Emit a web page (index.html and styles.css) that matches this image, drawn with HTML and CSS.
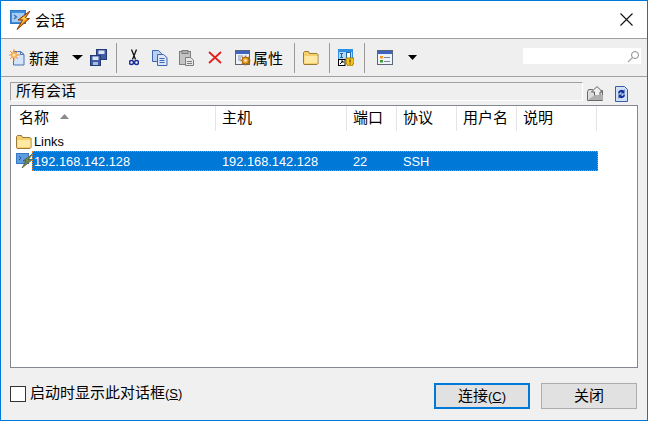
FILE: index.html
```html
<!DOCTYPE html>
<html lang="zh">
<head>
<meta charset="utf-8">
<title>会话</title>
<link rel="stylesheet" href="styles.css">
</head>
<body>
<div class="window">
  <header class="titlebar">
    <svg class="app-icon" width="21" height="20" viewBox="0 0 21 20">
      <rect x="0.500" y="0.500" width="15" height="13" fill="#3f8fe0" stroke="#2f78c8"/>
      <rect x="2" y="3" width="12" height="9" fill="#a8cdf2"/>
      <path d="M4 5l2.500 2L4 9" fill="none" stroke="#2f70b8" stroke-width="1.300"/>
      <path d="M20 1L8 10h4.500L7 19.500 19.500 8.500H15l5-7.500z" fill="#f08c14" stroke="#8a3a0c"/>
      <path d="M16 5l-5 4h3l-3 5 6-6h-3z" fill="#ffd94a"/>
    </svg>
    <span class="title">会话</span>
    <svg class="close" width="13" height="13" viewBox="0 0 13 13"><path d="M0.500 0.500l12 12M12.500 0.500l-12 12" stroke="#111" stroke-width="1.100" fill="none"/></svg>
  </header>

  <div class="toolbar">
    <svg class="i i-new" width="17" height="17" viewBox="0 0 17 17">
      <path d="M4.500 2.500h7l3.500 3v10.500h-10.500z" fill="#d4e4fa" stroke="#4f73b0"/>
      <path d="M11.500 2.500v3h3.500z" fill="#fff" stroke="#4f73b0"/>
      <path d="M5 0v12M-1 6h12M1 2l8 8M9 2l-8 8" stroke="#f09030" stroke-width="1"/>
      <circle cx="5" cy="6" r="3" fill="#f8a850"/>
      <circle cx="5" cy="6" r="1.500" fill="#fff0b0"/>
    </svg>
    <span class="label l-new">新建</span>
    <svg class="arrow a-new" width="11" height="5" viewBox="0 0 11 5"><path d="M0 0h11L5.500 5z" fill="#000"/></svg>
    <svg class="i i-save" width="17" height="17" viewBox="0 0 17 17">
      <rect x="6.500" y="0.500" width="10" height="10" fill="#3f5ca4" stroke="#223a78"/>
      <rect x="8.500" y="1.500" width="6" height="3.500" fill="#dbe4f5"/>
      <rect x="0.500" y="6.500" width="10" height="10" fill="#3f5ca4" stroke="#223a78"/>
      <rect x="2.500" y="7.500" width="6" height="3.500" fill="#dbe4f5"/>
      <rect x="3" y="13" width="5" height="3" fill="#a8bce0"/>
    </svg>
    <span class="sep s1"></span>
    <svg class="i i-cut" width="10" height="17" viewBox="0 0 10 17">
      <path d="M2.500 0.500l4 10M7.500 0.500l-4 10" stroke="#111" stroke-width="1.300" fill="none"/>
      <circle cx="2.500" cy="13.500" r="2" fill="none" stroke="#1c2f9c" stroke-width="1.500"/>
      <circle cx="7.500" cy="13.500" r="2" fill="none" stroke="#1c2f9c" stroke-width="1.500"/>
    </svg>
    <svg class="i i-copy" width="16" height="16" viewBox="0 0 16 16">
      <path d="M0.500 0.500h6l3 3v8h-9z" fill="#b9d0f2" stroke="#3f66b0"/>
      <path d="M5.500 4.500h6l3.500 3v8h-9.500z" fill="#dce8f9" stroke="#3f66b0"/>
      <path d="M7.500 8.500h5M7.500 10.500h5M7.500 12.500h5" stroke="#3f66b0"/>
    </svg>
    <svg class="i i-paste" width="16" height="16" viewBox="0 0 16 16">
      <rect x="0.500" y="1.500" width="11" height="13" fill="#c4c4c4" stroke="#7e7e7e"/>
      <rect x="3" y="0.500" width="6" height="3" fill="#adadad" stroke="#7e7e7e"/>
      <path d="M6.500 7.500h5l3 2.500v5.500h-8z" fill="#e6e6e6" stroke="#7e7e7e"/>
      <path d="M8 11.500h5M8 13.500h5" stroke="#7e7e7e"/>
    </svg>
    <svg class="i i-del" width="14" height="13" viewBox="0 0 14 13">
      <path d="M1 1l12 11M13 1L1 12" stroke="#e0201c" stroke-width="1.800" fill="none"/>
    </svg>
    <svg class="i i-prop" width="17" height="16" viewBox="0 0 17 16">
      <rect x="0.500" y="0.500" width="14" height="14" fill="#eef2fa" stroke="#5a6476"/>
      <rect x="1" y="1" width="13" height="3" fill="#3f63c0"/>
      <path d="M3 6h5M3 8h3M3 10h3" stroke="#8294b8"/>
      <path d="M10.500 5.500v2M10.500 13.500v2M5.500 10.500h2M13.500 10.500h2M7 7l1.500 1.500M14 7l-1.500 1.500M7 14l1.500-1.500M14 14l-1.500-1.500" stroke="#c07a14" stroke-width="1.500"/>
      <circle cx="10.500" cy="10.500" r="3.500" fill="#eca52c" stroke="#a0620c"/>
      <circle cx="10.500" cy="10.500" r="1.200" fill="#fff2c8"/>
    </svg>
    <span class="label l-prop">属性</span>
    <span class="sep s2"></span>
    <svg class="i i-folder" width="16" height="14" viewBox="0 0 16 14">
      <path d="M0.500 12.500V1.500l1-1h4l1 2h7.500l1 1v9l-1 1h-13z" fill="#f6cf6a" stroke="#9a7a34"/>
      <path d="M1.500 5h13v7h-13z" fill="#fde9a4"/>
    </svg>
    <span class="sep s3"></span>
    <svg class="i i-key" width="16" height="17" viewBox="0 0 16 17">
      <rect x="0" y="0" width="15" height="11" fill="#2f8fe0"/>
      <rect x="1" y="3" width="13" height="7" fill="#b5d6f4"/>
      <path d="M2 4.500h3M2 8.500h3M3.500 4.500v4" stroke="#1f68b0"/>
      <rect x="8.500" y="3.500" width="4" height="6" fill="#fff" stroke="#1f68b0"/>
      <rect x="0" y="10" width="7.500" height="7" fill="#000"/>
      <rect x="1" y="11" width="5.500" height="5" fill="#fff"/>
      <path d="M2 15l3-3M3 12h2v2" stroke="#000" fill="none"/>
      <path d="M8 9h8v5l-2 3h-4l-2-3z" fill="#f4c41c" stroke="#a07c10"/>
      <path d="M12 10.500v3M12 14.500v1" stroke="#5a3e02" stroke-width="1.200"/>
    </svg>
    <span class="sep s4"></span>
    <svg class="i i-list" width="16" height="15" viewBox="0 0 16 15">
      <rect x="0.500" y="0.500" width="15" height="14" fill="#f0f4f8" stroke="#5c6674"/>
      <rect x="1" y="1" width="14" height="3" fill="#3f63c0"/>
      <rect x="3" y="6" width="3" height="2.500" fill="#ef9a24"/>
      <rect x="3" y="10" width="3" height="2.500" fill="#3f9a30"/>
      <path d="M7 7.500h6M7 11.500h6" stroke="#7a8898"/>
    </svg>
    <svg class="arrow a-list" width="9" height="5" viewBox="0 0 9 5"><path d="M0 0h9L4.500 5z" fill="#000"/></svg>
    <div class="search">
      <svg width="13" height="13" viewBox="0 0 13 13">
        <circle cx="8" cy="5" r="3.500" fill="none" stroke="#8a8a8a"/>
        <path d="M5.500 7.500L1 12" stroke="#a8a8a8" stroke-width="1.200"/>
      </svg>
    </div>
  </div>

  <div class="pathrow">
    <div class="pathbox">所有会话</div>
    <svg class="up" width="17" height="15" viewBox="0 0 17 15">
      <path d="M0.500 5.500l1-2h4l1 1h9v10h-15z" fill="#dcdcdc" stroke="#6a6a6a"/>
      <path d="M10 0.500l5.500 5.500H13v6H7.500V6H4.500z" fill="#f0f0f0" stroke="#5e5e5e"/>
      <path d="M2 13l6-4h8v5H2z" fill="#b0b0b0"/>
    </svg>
    <svg class="refresh" width="13" height="16" viewBox="0 0 13 16">
      <path d="M0.500 0.500h9l3 3v12h-12z" fill="#cfe0f8" stroke="#3a5ca4"/>
      <path d="M3 7.500a3.500 3.500 0 0 1 5.500-3l1-1.200v4.200H5.500l1.400-1.500A2 2 0 0 0 4.500 7.500z" fill="#14309a"/>
      <path d="M10 8.500a3.500 3.500 0 0 1-5.500 3l-1 1.200V8.500h4l-1.400 1.500a2 2 0 0 0 2.400-1.500z" fill="#14309a"/>
    </svg>
  </div>

  <div class="listbox">
    <div class="cols head">
      <div class="th th-first">名称<svg class="sort" width="9" height="5" viewBox="0 0 9 5"><path d="M4.500 0L9 5H0z" fill="#8a8a8a"/></svg></div>
      <div class="th">主机</div>
      <div class="th">端口</div>
      <div class="th">协议</div>
      <div class="th">用户名</div>
      <div class="th">说明</div>
    </div>
    <div class="row folder-row">
      <svg width="16" height="14" viewBox="0 0 16 14">
        <path d="M0.500 12.500V1.500l1-1h4l1 2h7.500l1 1v9l-1 1h-13z" fill="#f6cf6a" stroke="#9a7a34"/>
        <path d="M1.500 5h13v7h-13z" fill="#fde9a4"/>
      </svg>
      <span class="links">Links</span>
    </div>
    <div class="row session-row">
      <svg class="session-icon" width="17" height="15" viewBox="0 0 17 15">
        <rect x="0.500" y="0.500" width="12" height="10" fill="#5f9be0" stroke="#3c78c0"/>
        <path d="M3 3l2 2-2 2" fill="none" stroke="#1f5ca0"/>
        <path d="M16.500 1L7 8h3l-4 7 10.500-8.500h-4z" fill="#75884a" stroke="#44542c" stroke-width="0.700"/>
      </svg>
      <div class="cols selected">
        <div class="td first">192.168.142.128</div>
        <div class="td">192.168.142.128</div>
        <div class="td">22</div>
        <div class="td">SSH</div>
        <div class="td"></div>
        <div class="td"></div>
      </div>
    </div>
  </div>

  <footer class="footer">
    <label class="check"><span class="box"></span><span class="check-text">启动时显示此对话框<span class="key">(<u>S</u>)</span></span></label>
    <button class="btn primary">连接<span class="key">(<u>C</u>)</span></button>
    <button class="btn">关闭</button>
  </footer>
</div>
</body>
</html>
```
FILE: styles.css
```css
* { box-sizing: border-box; }
html, body { margin: 0; padding: 0; }
body {
  width: 648px;
  height: 421px;
  overflow: hidden;
  font-family: "Noto Sans CJK SC", "Liberation Sans", sans-serif;
  font-size: 15px;
  color: #000;
}
svg { display: block; flex: none; }

.window {
  width: 648px;
  height: 421px;
  background: #f0f0f0;
  border: 1px solid #0078d7;
  display: flex;
  flex-direction: column;
}

.titlebar {
  height: 37px;
  flex: none;
  background: #fff;
  display: flex;
  align-items: center;
  padding: 0 14px 0 9px;
}
.title { margin-left: 4px; font-size: 15px; line-height: 20px; }
.close { margin-left: auto; }

.toolbar {
  height: 39px;
  flex: none;
  display: flex;
  align-items: center;
  border-top: 1px solid #a0a0a0;
  border-bottom: 1px solid #a0a0a0;
  background: #efefef;
}
.label { font-size: 15px; line-height: 20px; }
.sep { width: 1px; height: 30px; background: #9a9a9a; flex: none; }

.i-new { margin-left: 8px; }
.l-new { margin-left: 3px; }
.a-new { margin-left: 13px; }
.i-save { margin-left: 7px; }
.s1 { margin-left: 9px; }
.i-cut { margin-left: 12px; }
.i-copy { margin-left: 13px; }
.i-paste { margin-left: 11px; }
.i-del { margin-left: 13px; }
.i-prop { margin-left: 13px; }
.l-prop { margin-left: 1px; }
.s2 { margin-left: 11px; }
.i-folder { margin-left: 8px; }
.s3 { margin-left: 10px; }
.i-key { margin-left: 8px; }
.s4 { margin-left: 10px; }
.i-list { margin-left: 12px; }
.a-list { margin-left: 15px; }

.search {
  margin: 0 6px 3px auto;
  width: 118px;
  height: 16px;
  background: #fff;
  display: flex;
  align-items: center;
  justify-content: flex-end;
  padding-right: 1px;
}

.pathrow {
  height: 28px;
  flex: none;
  display: flex;
  align-items: flex-start;
  padding: 5px 0 0 9px;
}
.pathbox {
  width: 573px;
  height: 19px;
  background: #efefef;
  border-top: 1px solid #a0a0a0;
  border-left: 1px solid #a0a0a0;
  border-right: 1px solid #fff;
  border-bottom: 1px solid #fff;
  padding-left: 5px;
  font-size: 15px;
  line-height: 14px;
}
.up { margin: 4px 0 0 4px; }
.refresh { margin: 4px 0 0 11px; }

.listbox {
  width: 628px;
  height: 263px;
  margin-left: 9px;
  flex: none;
  background: #fff;
  border: 1px solid #828790;
}
.cols {
  display: grid;
  grid-template-columns: 205px 131px 50px 60px 60px 80px;
}
.head { height: 25px; width: 586px; }
.th {
  display: flex;
  align-items: center;
  padding: 0 0 4px 6px;
  border-right: 1px solid #e5e5e5;
  font-size: 15px;
  line-height: 20px;
}
.th-first { padding-left: 8px; }
.sort { margin-left: 11px; }

.row { display: flex; align-items: center; }
.folder-row { height: 19px; margin-top: 1px; padding-left: 5px; gap: 2px; }
.links, .td {
  font-family: "Liberation Sans", sans-serif;
  font-size: 12.8px;
}
.links { line-height: 17px; padding-bottom: 1px; }
.session-row { height: 21px; padding-left: 5px; align-items: flex-start; }
.session-icon { margin-top: 2px; margin-right: -1px; }
.selected {
  width: 566px;
  height: 20px;
  grid-template-columns: 189px 131px 50px 60px 60px 74px;
  background: #0078d7;
  color: #fff;
  border: 1px dotted #f08020;
}
.td { padding-left: 0; line-height: 20px; white-space: nowrap; }
.td.first { padding-left: 1px; }

.footer {
  flex: 1;
  display: flex;
  align-items: flex-start;
  padding: 15px 10px 0 9px;
}
.check {
  display: flex;
  align-items: center;
  gap: 4px;
  font-size: 15px;
  line-height: 18px;
  margin-right: auto;
  margin-top: 0;
}
.check-text { padding-bottom: 2px; }
.box {
  width: 16px;
  height: 16px;
  background: #fff;
  border: 1px solid #333;
}
.key { font-family: "Liberation Sans", sans-serif; font-size: 13px; }
.btn {
  width: 96px;
  height: 26px;
  padding: 0 0 2px;
  margin-left: 11px;
  background: #e1e1e1;
  border: 1px solid #adadad;
  font-family: inherit;
  font-size: 15px;
  line-height: 20px;
  color: #000;
}
.btn.primary { border: 2px solid #0078d7; }
```
